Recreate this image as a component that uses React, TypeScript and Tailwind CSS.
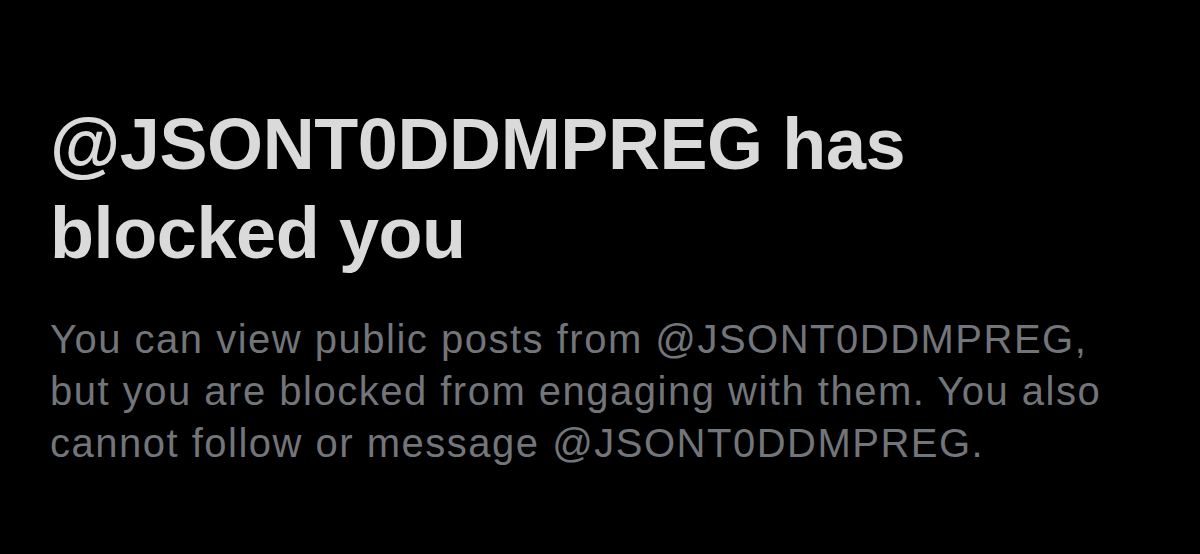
export default function App() {
  return (
    <div className="w-[1200px] h-[554px] bg-black overflow-hidden" style={{ fontFamily: '"Liberation Sans", Arial, sans-serif' }}>
      <div className="pl-[50px] pt-[100px]">
        <h1 className="w-[1060px] text-[72px] leading-[89px] font-bold text-[#dadada] tracking-[-0.4px]">
          @JSONT0DDMPREG has blocked you
        </h1>
        <p className="mt-[35px] w-[1080px] text-[40px] leading-[52px] text-[#727579] tracking-[1.5px]">
          You can view public posts from @JSONT0DDMPREG, but you are blocked from engaging with them. You also cannot follow or message @JSONT0DDMPREG.
        </p>
      </div>
    </div>
  );
}
